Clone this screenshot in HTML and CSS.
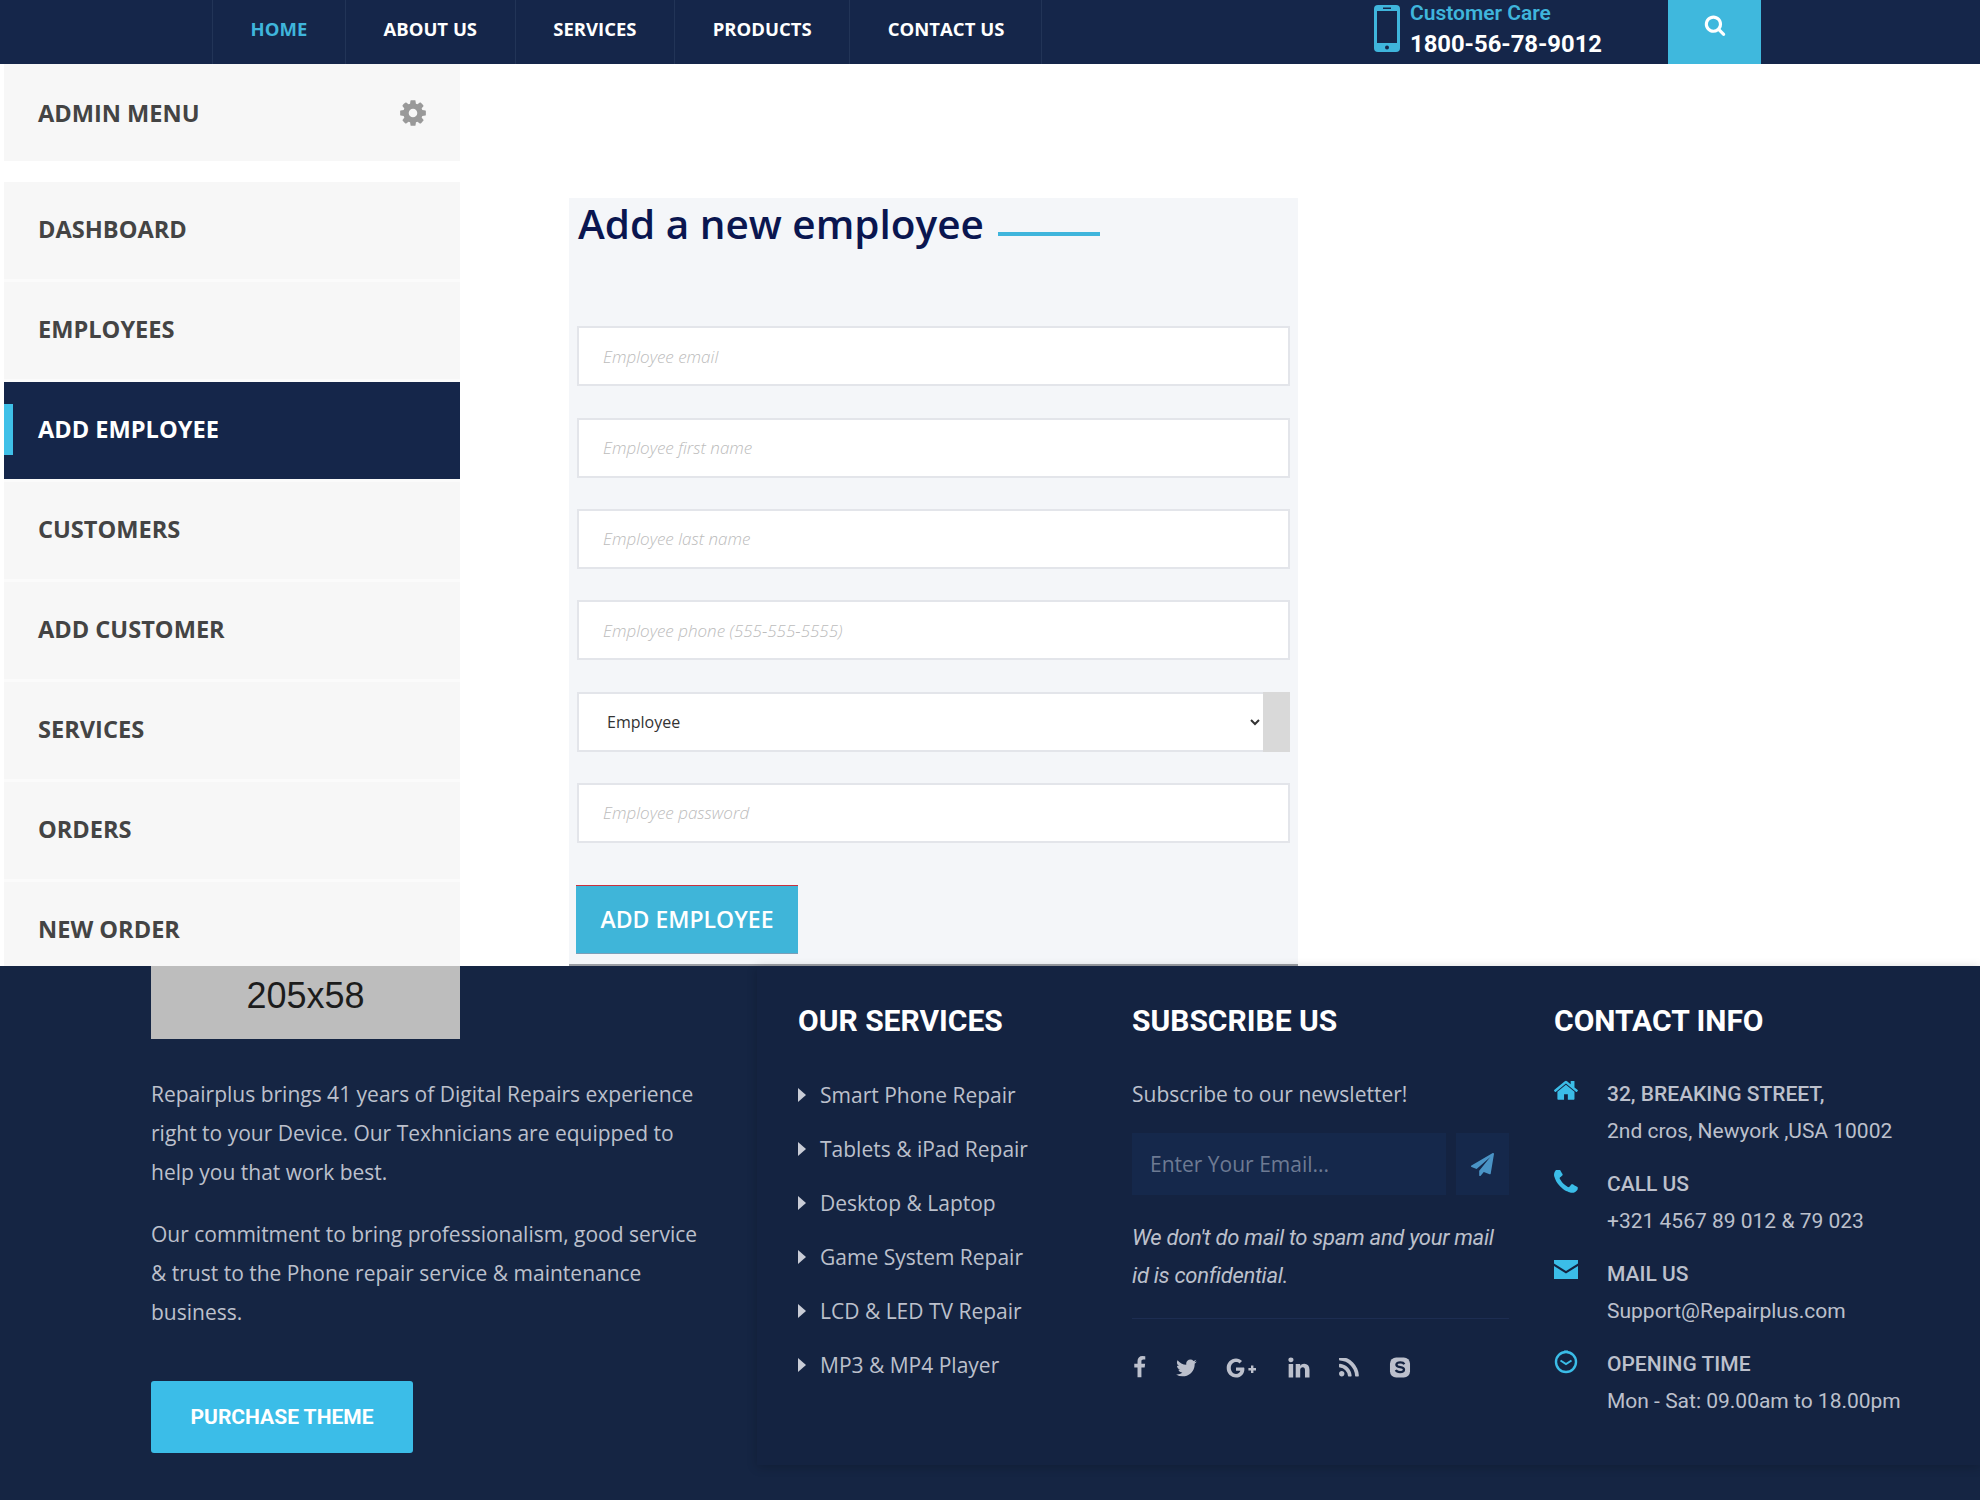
FILE: index.html
```html
<!DOCTYPE html>
<html>
<head>
  <title>Add a new employee</title>
  <link rel="stylesheet" href="styles.css">
</head>
<body>
  <header class="topbar">
    <nav class="topnav">
      <a class="active" href="#">HOME</a>
      <a href="#">ABOUT US</a>
      <a href="#">SERVICES</a>
      <a href="#">PRODUCTS</a>
      <a href="#">CONTACT US</a>
    </nav>
    <div class="care">
      <svg class="care-icon" viewBox="0 0 26 47">
        <rect width="26" height="47" rx="4" fill="#3fb5dc"/>
        <rect x="3" y="6" width="20" height="32" fill="#15264a"/>
        <rect x="9" y="2.5" width="8" height="1.5" fill="#15264a"/>
        <circle cx="13" cy="42.5" r="2" fill="#15264a"/>
      </svg>
      <div>
        <div class="care-label">Customer Care</div>
        <div class="care-number">1800-56-78-9012</div>
      </div>
    </div>
    <a class="search-btn" href="#">
      <svg viewBox="0 0 1792 1792" width="22" height="22"><path fill="#fff" d="M1216 832q0-185-131.5-316.5t-316.5-131.5-316.5 131.5-131.5 316.5 131.5 316.5 316.5 131.5 316.5-131.5 131.5-316.5zm512 832q0 52-38 90t-90 38q-54 0-90-38l-343-342q-179 124-399 124-143 0-273.5-55.5t-225-150-150-225-55.5-273.5 55.5-273.5 150-225 225-150 273.5-55.5 273.5 55.5 225 150 150 225 55.5 273.5q0 220-124 399l343 343q37 37 37 90z"/></svg>
    </a>
  </header>

  <main class="content">
    <aside class="sidebar">
      <div class="side-title">
        <span>ADMIN MENU</span>
        <svg viewBox="0 0 1792 1792" width="30" height="30"><path fill="#999" d="M1152 896q0-106-75-181t-181-75-181 75-75 181 75 181 181 75 181-75 75-181zm512-109v222q0 12-8 23t-20 13l-185 28q-19 54-39 91 35 50 107 138 10 12 10 25t-9 23q-27 37-99 108t-94 71q-12 0-26-9l-138-108q-44 23-91 38-16 136-29 186-7 28-36 28h-222q-14 0-24.5-8.5t-11.5-21.5l-28-184q-49-16-90-37l-141 107q-10 9-25 9-14 0-25-11-126-114-165-168-7-10-7-23 0-12 8-23 15-21 51-66.5t54-70.5q-27-50-41-99l-183-27q-13-2-21-12.5t-8-23.5v-222q0-12 8-23t19-13l186-28q14-46 39-92-40-57-107-138-10-12-10-24 0-10 9-23 26-36 98.5-107.5t94.5-71.5q13 0 26 10l138 107q44-23 91-38 16-136 29-186 7-28 36-28h222q14 0 24.5 8.5t11.5 21.5l28 184q49 16 90 37l142-107q9-9 24-9 13 0 25 10 129 119 165 170 7 8 7 22 0 12-8 23-15 21-51 66.5t-54 70.5q26 50 41 98l183 28q13 2 21 12.5t8 23.5z"/></svg>
      </div>
      <ul class="side-menu">
        <li><a href="#">DASHBOARD</a></li>
        <li><a href="#">EMPLOYEES</a></li>
        <li><a class="active" href="#">ADD EMPLOYEE</a></li>
        <li><a href="#">CUSTOMERS</a></li>
        <li><a href="#">ADD CUSTOMER</a></li>
        <li><a href="#">SERVICES</a></li>
        <li><a href="#">ORDERS</a></li>
        <li><a href="#">NEW ORDER</a></li>
      </ul>
    </aside>

    <section class="form-box">
      <h2 class="form-title">Add a new employee<span class="title-line"></span></h2>
      <form class="emp-form">
        <input type="text" placeholder="Employee email">
        <input type="text" placeholder="Employee first name">
        <input type="text" placeholder="Employee last name">
        <input type="text" placeholder="Employee phone (555-555-5555)">
        <div class="select-wrap">
          <select>
            <option>Employee</option>
            <option>Manager</option>
            <option>Admin</option>
          </select>
        </div>
        <input type="password" placeholder="Employee password">
        <button type="button" class="add-btn">ADD EMPLOYEE</button>
      </form>
    </section>
  </main>

  <footer class="footer">
    <div class="foot-about">
      <div class="logo-holder">205x58</div>
      <p>Repairplus brings 41 years of Digital Repairs experience right to your Device. Our Texhnicians are equipped to help you that work best.</p>
      <p>Our commitment to bring professionalism, good service &amp; trust to the Phone repair service &amp; maintenance business.</p>
      <a class="purchase" href="#">PURCHASE THEME</a>
    </div>

    <div class="foot-panel">
      <div class="foot-services">
        <h3>OUR SERVICES</h3>
        <ul>
          <li>Smart Phone Repair</li>
          <li>Tablets &amp; iPad Repair</li>
          <li>Desktop &amp; Laptop</li>
          <li>Game System Repair</li>
          <li>LCD &amp; LED TV Repair</li>
          <li>MP3 &amp; MP4 Player</li>
        </ul>
      </div>

      <div class="foot-subscribe">
        <h3>SUBSCRIBE US</h3>
        <p class="sub-text">Subscribe to our newsletter!</p>
        <div class="sub-form">
          <input type="text" placeholder="Enter Your Email...">
          <a class="sub-send" href="#">
            <svg viewBox="0 0 1792 1792" width="23" height="23"><path fill="#4a94c6" d="M1764 11q33 24 27 64l-256 1536q-5 29-32 45-14 8-31 8-11 0-24-5l-453-185-242 295q-18 23-49 23-13 0-22-4-19-7-30.5-23.5t-11.5-36.5v-349l864-1059-1069 925-395-162q-37-14-40-55-2-40 32-59l1664-960q15-9 32-9 20 0 36 11z"/></svg>
          </a>
        </div>
        <p class="sub-note">We don't do mail to spam and your mail id is confidential.</p>
        <div class="social">
          <svg viewBox="300 0 1100 1792" width="14" height="23"><path d="M1343 12v264h-157q-86 0-116 36t-30 108v189h293l-39 296h-254v759h-306v-759h-255v-296h255v-218q0-186 104-288.5t277-102.5q147 0 228 12z"/></svg>
          <svg viewBox="100 200 1600 1400" width="21" height="20"><path d="M1684 408q-67 98-162 167 1 14 1 42 0 130-38 259.5t-115.5 248.5-184.5 210.5-258 146-323 54.5q-271 0-496-145 35 4 78 4 225 0 401-138-105-2-188-64.5t-114-159.5q33 5 61 5 43 0 85-11-112-23-185.5-111.5t-73.5-205.5v-4q68 38 146 41-66-44-105-115t-39-154q0-88 44-163 121 149 294.5 238.5t371.5 99.5q-8-38-8-74 0-134 94.5-228.5t228.5-94.5q140 0 236 102 109-21 205-78-37 115-142 178 92-10 184-50z"/></svg>
          <svg viewBox="0 0 32 20" width="32" height="20"><path d="M18 9.500H10v3.200h4.400c-.5 2-2.200 3.200-4.400 3.200-2.900 0-5.200-2.600-5.200-5.900S7.100 4.100 10 4.100c1.400 0 2.600.5 3.500 1.400l2.500-2.500C14.500 1.500 12.400.5 10 .5 4.800.5.700 4.800.700 10s4.100 9.500 9.300 9.500c5.400 0 8.400-3.900 8.400-8.600 0-.5 0-1-.4-1.400z"/><path d="M25 7.500h2.400v2.500H30v2.400h-2.600V15H25v-2.600h-2.600V10H25z"/></svg>
          <svg viewBox="100 120 1600 1520" width="22" height="21"><path d="M477 625v991h-330v-991h330zm21-306q1 73-50.500 122t-135.500 49h-2q-82 0-132-49t-50-122q0-74 51.500-122.500t134.500-48.500 133 48.500 51 122.500zm1166 729v568h-329v-530q0-105-40.500-164.500t-126.500-59.500q-63 0-105.500 34.500t-63.500 85.500q-11 30-11 81v553h-329q2-399 2-647t-1-296l-1-48h329v144h-2q20-32 41-56t56.500-52 87-43.500 114.500-15.500q171 0 275 113.500t104 332.500z"/></svg>
          <svg viewBox="190 250 1420 1300" width="20" height="19"><path d="M576 1344q0 80-56 136t-136 56-136-56-56-136 56-136 136-56 136 56 56 136zm512 123q2 28-17 48-18 21-47 21h-135q-25 0-43-16.500t-20-41.500q-22-229-184.500-391.500t-391.500-184.500q-25-2-41.500-20t-16.500-43v-135q0-29 21-47 17-17 43-17h5q160 13 306 80.500t259 181.500q114 113 181.500 259t80.500 306zm512 2q2 27-18 47-18 20-46 20h-143q-26 0-44.500-17.500t-19.500-42.500q-12-215-101-408.500t-231.500-336-336-231.500-408.500-102q-25-1-42.500-19.500t-17.500-43.500v-143q0-28 20-46 18-18 44-18h3q262 13 501.500 120t425.500 294q187 186 294 425.500t120 501.500z"/></svg>
          <svg viewBox="0 0 22 22" width="22" height="21"><rect x="0.500" y="0.500" width="21" height="21" rx="6.500"/><path class="s-sk-s" d="M15.500 7.500c-.6-1.200-2.300-1.900-4.300-1.900-2.300 0-4 1-4 2.600 0 3.300 8 1.700 8 4.900 0 1.700-1.900 2.800-4.200 2.800-2.100 0-3.700-.8-4.400-2.200"/></svg>
        </div>
      </div>

      <div class="foot-contact">
        <h3>CONTACT INFO</h3>
        <div class="contact-row">
          <svg viewBox="90 200 1620 1340" width="24" height="20"><path d="M1472 992v480q0 26-19 45t-45 19h-384v-384h-256v384h-384q-26 0-45-19t-19-45v-480q0-1 .5-3t.5-3l575-474 575 474q1 2 1 6zm223-69l-62 74q-8 9-21 11h-3q-13 0-21-7l-692-577-692 577q-12 8-24 7-13-2-21-11l-62-74q-8-10-7-23.500t11-21.500l719-599q32-26 76-26t76 26l244 204v-195q0-14 9-23t23-9h192q14 0 23 9t9 23v408l219 182q10 8 11 21.500t-7 23.500z"/></svg>
          <div><b>32, BREAKING STREET,</b><br>2nd cros, Newyork ,USA 10002</div>
        </div>
        <div class="contact-row">
          <svg viewBox="190 190 1420 1420" width="24" height="24"><path d="M1600 1240q0 27-10 70.500t-21 68.500q-21 50-122 106-94 51-186 51-27 0-53-3.500t-57.500-12.500-47-14.500-55.500-20.500-49-18q-98-35-175-83-127-79-264-216t-216-264q-48-77-83-175-3-9-18-49t-20.500-55.500-14.500-47-12.500-57.500-3.500-53q0-92 51-186 56-101 106-122 25-11 68.500-21t70.500-10q14 0 21 3 18 6 53 76 11 19 30 54t35 63.500 31 53.500q3 4 17.500 25t21.500 35.500 7 28.500q0 20-28.500 50t-62 55-62 53-28.500 46q0 9 5 22.500t8.500 20.500 14 24 11.500 19q76 137 174 235t235 174q2 1 19 11.500t24 14 20.500 8.500 22.500 5q18 0 46-28.500t53-62 55-62 50-28.500q14 0 28.500 7t35.500 21.500 25 17.500q25 15 53.500 31t63.500 35 54 30q70 35 76 53 3 7 3 21z"/></svg>
          <div><b>CALL US</b><br>+321 4567 89 012 &amp; 79 023</div>
        </div>
        <div class="contact-row">
          <svg viewBox="0 0 24 19" width="24" height="19"><path d="M0 0h24v3.500L12 11 0 3.500z"/><path d="M0 6l12 7.500L24 6v13H0z"/></svg>
          <div><b>MAIL US</b><br>Support@Repairplus.com</div>
        </div>
        <div class="contact-row">
          <svg viewBox="0 0 24 24" width="24" height="24"><circle cx="12" cy="12" r="10" fill="none" stroke="#3bbde8" stroke-width="2.400"/><path d="M6.500 10.500L12 14l5.500-3.500" fill="none" stroke="#3bbde8" stroke-width="2"/><path d="M10 .5h4v2h-4z"/></svg>
          <div><b>OPENING TIME</b><br>Mon - Sat: 09.00am to 18.00pm</div>
        </div>
      </div>
    </div>
  </footer>
</body>
</html>
```

FILE: styles.css
```css
body {
  margin: 0;
  font-family: "Open Sans", sans-serif;
  background-color: #fff;
  overflow-x: hidden;
}

ul {
  list-style: none;
  margin: 0;
  padding: 0;
}

a {
  text-decoration: none;
}

/* top bar */
.topbar {
  display: flex;
  height: 64px;
  padding-left: 212px;
  background-color: #15264a;
}

.topnav {
  display: flex;
  width: 829px;
  border-right: 1px solid #223457;
}

.topnav a {
  flex: none;
  padding: 0 37.600px;
  border-left: 1px solid #223457;
  line-height: 58px;
  font-size: 18.500px;
  font-weight: 700;
  white-space: nowrap;
  color: #fff;
}

.topnav a.active {
  color: #3fb5dc;
}

.care {
  display: flex;
  align-items: flex-start;
  gap: 10px;
  margin-left: 332px;
  width: 294px;
  padding-top: 5px;
  font-family: Roboto, sans-serif;
}

.care-icon {
  width: 26px;
  height: 47px;
}

.care-label {
  margin-top: -5px;
  font-size: 21px;
  font-weight: 600;
  line-height: 26px;
  color: #3fb5dc;
}

.care-number {
  margin-top: 2px;
  font-size: 23.800px;
  font-weight: 700;
  line-height: 32px;
  color: #fff;
}

.search-btn {
  display: flex;
  justify-content: center;
  padding-top: 14px;
  box-sizing: border-box;
  width: 93px;
  background-color: #3fb8dd;
}

.search-btn svg {
  width: 22px;
  height: 22px;
}

/* main area */
.content {
  display: flex;
  height: 902px;
  overflow: hidden;
}

.sidebar {
  width: 456px;
  margin-left: 4px;
}

.side-title {
  display: flex;
  justify-content: space-between;
  align-items: center;
  height: 97px;
  padding: 0 32px 0 34px;
  margin-bottom: 21px;
  background-color: #f7f7f7;
  font-size: 23.600px;
  font-weight: 700;
  color: #444;
}

.side-menu {
  background-color: #fbfbfb;
}

.side-menu a {
  display: flex;
  align-items: center;
  height: 97px;
  margin-bottom: 3px;
  padding: 0 0 4px 34px;
  box-sizing: border-box;
  background-color: #f7f7f7;
  font-size: 23.600px;
  font-weight: 700;
  color: #444;
  position: relative;
}

.side-menu a.active {
  background-color: #15264a;
  color: #fff;
}

.side-menu a.active::before {
  content: "";
  position: absolute;
  left: 0;
  top: 22px;
  width: 9px;
  height: 51px;
  background-color: #3fc0e8;
}

/* form */
.form-box {
  width: 729px;
  margin: 134px 0 0 109px;
  padding: 0 8px;
  box-sizing: border-box;
  background-color: #f4f6f9;
  border-bottom: 2px solid #9a9da3;
}

.form-title {
  display: flex;
  align-items: flex-start;
  margin: 0;
  height: 128.400px;
  padding-left: 1px;
  box-sizing: border-box;
  line-height: 51px;
  font-size: 40.500px;
  font-weight: 600;
  color: #0a1650;
}

.title-line {
  width: 102px;
  height: 4px;
  margin: 34px 0 0 14px;
  background-color: #3fb5dc;
}

.emp-form {
  display: flex;
  flex-direction: column;
  gap: 31.300px;
}

.emp-form input {
  height: 60px;
  padding: 0 24px;
  box-sizing: border-box;
  border: 2px solid #e3e5ea;
  background-color: #fff;
  font-family: "Open Sans", sans-serif;
  font-size: 17px;
  font-style: italic;
  outline: none;
}

.emp-form input::placeholder {
  color: #bcbcbc;
  font-weight: 300;
}

.select-wrap {
  height: 60px;
  background-color: #d9d9d9;
}

.select-wrap select {
  width: 686px;
  height: 60px;
  padding-left: 24px;
  box-sizing: border-box;
  border: 2px solid #e3e5ea;
  border-right: none;
  background-color: #fff;
  font-family: "Open Sans", sans-serif;
  font-size: 16px;
  color: #333;
  outline: none;
}

.add-btn {
  align-self: flex-start;
  width: 222px;
  height: 69px;
  margin: 10.800px 0 0 -1px;
  border: none;
  border-top: 1px solid #c8323f;
  border-bottom: 1px solid #7c9fb8;
  background-color: #3fb5d9;
  font-family: "Open Sans", sans-serif;
  font-size: 23px;
  font-weight: 600;
  color: #fff;
}

/* footer */
.footer {
  display: flex;
  height: 534px;
  background-color: #152543;
  font-family: "Open Sans", sans-serif;
  color: #bcc0cc;
}

.foot-about {
  width: 606px;
  padding-left: 151px;
}

.logo-holder {
  width: 309px;
  height: 73px;
  background-color: #bdbdbd;
  font-family: "Liberation Sans", sans-serif;
  font-size: 36px;
  line-height: 60px;
  text-align: center;
  color: #1c1c1c;
}

.foot-about p {
  margin: 36px 0 0;
  width: 560px;
  font-size: 21px;
  line-height: 39px;
}

.foot-about p + p {
  margin-top: 23px;
}

.purchase {
  display: block;
  width: 262px;
  height: 72px;
  margin-top: 49px;
  border-radius: 3px;
  background-color: #3bbde8;
  font-family: Roboto, sans-serif;
  font-size: 21px;
  font-weight: 700;
  line-height: 72px;
  text-align: center;
  color: #fff;
}

.foot-panel {
  display: flex;
  flex: 1;
  height: 499px;
  padding-left: 41px;
  box-sizing: border-box;
  background-color: #142341;
  box-shadow: 0 2px 10px rgba(0, 0, 0, 0.2);
}

.footer h3 {
  margin: 0;
  padding-top: 35px;
  font-family: Roboto, sans-serif;
  font-size: 30px;
  font-weight: 700;
  line-height: 40px;
  color: #fff;
}

.foot-services {
  width: 334px;
}

.foot-services ul {
  margin-top: 27px;
}

.foot-services li {
  display: flex;
  align-items: center;
  height: 54px;
  font-size: 21px;
}

.foot-services li::before {
  content: "";
  width: 0;
  height: 0;
  margin-right: 14px;
  border-left: 8px solid #c9ccd6;
  border-top: 7px solid transparent;
  border-bottom: 7px solid transparent;
}

.foot-subscribe {
  width: 422px;
}

.foot-subscribe > * {
  max-width: 377px;
}

.sub-text {
  margin: 38px 0 0;
  font-size: 21px;
  line-height: 30px;
}

.sub-form {
  display: flex;
  justify-content: space-between;
  height: 62px;
  margin-top: 24px;
}

.sub-form input {
  width: 314px;
  padding: 0 18px;
  box-sizing: border-box;
  border: none;
  background-color: #15284b;
  font-family: "Open Sans", sans-serif;
  font-size: 21px;
  outline: none;
}

.sub-form input::placeholder {
  color: #6d7a93;
}

.sub-send {
  display: flex;
  align-items: center;
  justify-content: center;
  width: 53px;
  background-color: #15284b;
}

.sub-note {
  margin: 24px 0 0;
  padding-bottom: 23px;
  border-bottom: 1px solid #1d2d52;
  font-family: Roboto, sans-serif;
  font-size: 22px;
  font-style: italic;
  line-height: 38px;
  letter-spacing: -0.3px;
}

.social {
  display: flex;
  align-items: center;
  gap: 29.500px;
  margin-top: 37px;
}

.social svg {
  fill: #bcc0cc;
}

.social .s-sk-s {
  fill: none;
  stroke: #142341;
  stroke-width: 2.400;
}

.foot-contact {
  font-family: Roboto, sans-serif;
}

.foot-contact h3 {
  margin-bottom: 35px;
}

.contact-row {
  display: flex;
  gap: 29px;
  height: 90px;
  font-size: 21px;
  line-height: 37px;
}

.contact-row svg {
  flex: none;
  margin-top: 4px;
  fill: #3bbde8;
}

.contact-row b {
  font-weight: 500;
}
```
